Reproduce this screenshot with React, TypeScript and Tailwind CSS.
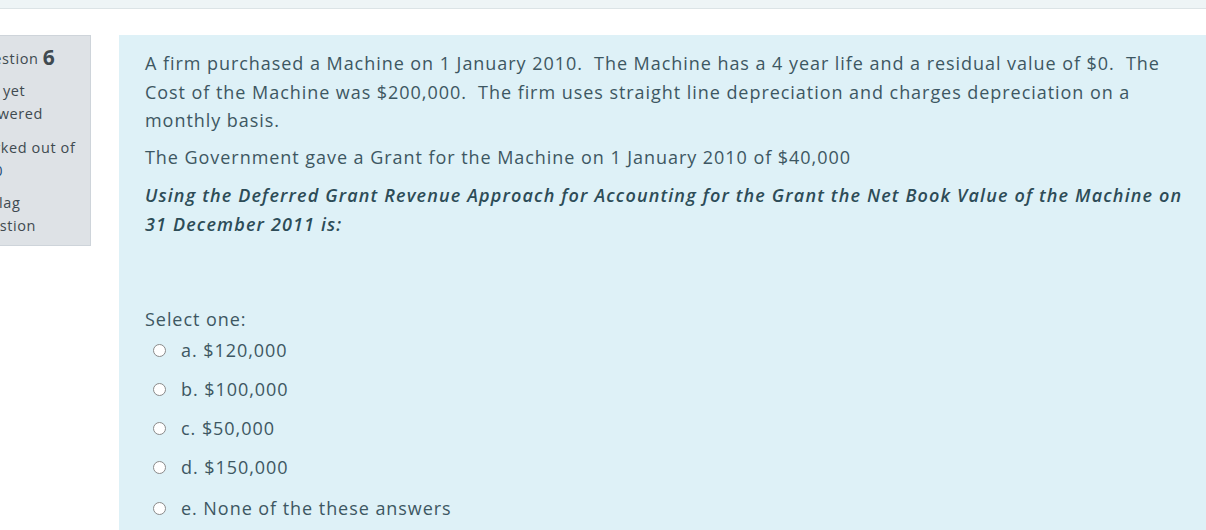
const options = [
  "a. $120,000",
  "b. $100,000",
  "c. $50,000",
  "d. $150,000",
  "e. None of the these answers",
];

export default function App() {
  return (
    <div className="w-[1206px] h-[530px] overflow-hidden bg-white font-['Open_Sans',sans-serif] text-[#3d5762]">
      <div className="h-[9px] bg-[#eef4f6] border-b border-[#dce3e6]" />
      <div className="flex items-start mt-[26px]">
        {/* question info, partly scrolled off to the left */}
        <div className="w-[130px] -ml-[39px] shrink-0 h-[211px] bg-[#dee2e6] border border-[#ced4da] pl-[10px] pt-[6px] text-[14.5px] leading-[23px] tracking-[0.6px] text-[#404a50]">
          <h3 className="leading-[30px]">
            Question <span className="text-[21px] font-bold align-[-1px] tracking-normal">6</span>
          </h3>
          <div className="mt-[5px]">
            Not yet
            <br />
            answered
          </div>
          <div className="mt-[11px]">
            Marked out of
            <br />
            <span className="text-[#1f4f7a]">1.00</span>
          </div>
          <div className="mt-[9px]">
            <span className="inline-block w-[19px] align-[-1px]">
              <svg width="10" height="12" viewBox="0 0 10 12" fill="none" stroke="#404a50" strokeWidth="1.2">
                <path d="M1 1v11M1 1.5h7l-1.5 2.5L8 6.5H1" />
              </svg>
            </span>
            Flag
            <br />
            question
          </div>
        </div>

        {/* formulation */}
        <div className="ml-[28px] w-[1100px] shrink-0 min-h-[520px] bg-[#def1f7] pl-[26px] pt-[14px]">
          <div className="w-[1045px] text-[18px] leading-[28.5px] tracking-[0.95px]">
            <p>
              A firm purchased a Machine on 1 January 2010.&nbsp; The Machine has a 4 year life and a residual value
              of $0.&nbsp; The Cost of the Machine was $200,000.&nbsp; The firm uses straight line depreciation and
              charges depreciation on a monthly basis.
            </p>
            <p className="mt-[8.5px]">The Government gave a Grant for the Machine on 1 January 2010 of $40,000</p>
            <p className="mt-[9.5px] italic font-semibold text-[#2d4c57] tracking-[1.15px]">
              Using the Deferred Grant Revenue Approach for Accounting for the Grant the Net Book Value of the Machine
              on 31 December 2011 is:
            </p>
          </div>

          <div className="mt-[67px] text-[18px] tracking-[0.95px]">
            <div className="leading-[28px]">Select one:</div>
            <div className="flex flex-col mt-[3.5px]">
              {options.map((o, i) => (
                <label
                  key={o}
                  className={
                    "flex items-center h-[28.5px] " + (i === 0 ? "" : i === 4 ? "mt-[12.5px]" : "mt-[10.5px]")
                  }
                >
                  <span className="ml-[8px] w-[13px] h-[13px] rounded-full border border-[#8a8a8a] bg-white shrink-0" />
                  <span className="ml-[15px]">{o}</span>
                </label>
              ))}
            </div>
          </div>
        </div>
      </div>
    </div>
  );
}
